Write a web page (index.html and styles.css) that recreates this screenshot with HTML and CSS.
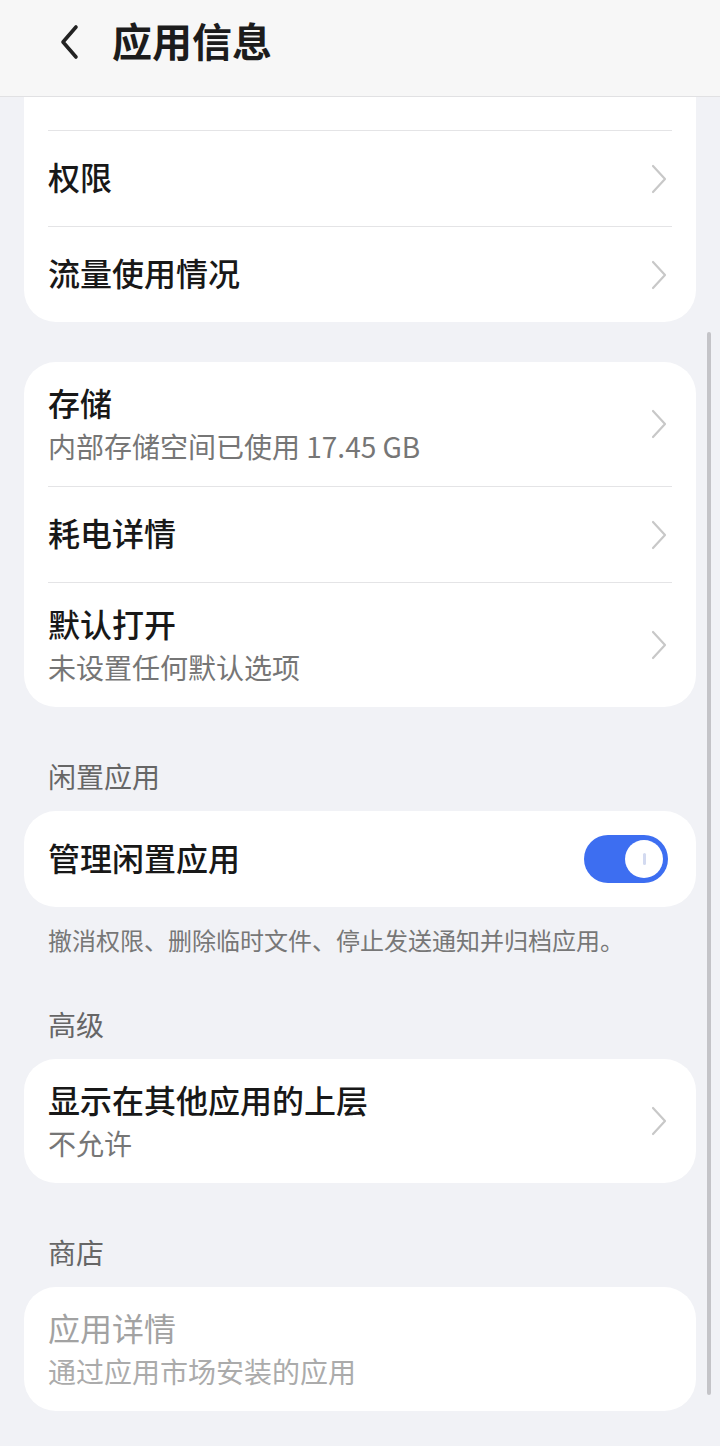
FILE: index.html
```html
<!DOCTYPE html>
<html lang="zh-CN">
<head>
  <meta charset="UTF-8">
  <meta name="viewport" content="width=device-width, initial-scale=1.0">
  <title>应用信息</title>
  <link rel="stylesheet" href="styles.css">
</head>
<body>
  <header class="topbar">
    <svg class="back" width="24" height="36" viewBox="0 0 24 36">
      <path d="M18 3 L5 18 L18 33" fill="none" stroke="#222" stroke-width="3.6" stroke-linecap="round" stroke-linejoin="round"/>
    </svg>
    <h1>应用信息</h1>
  </header>

  <main class="content">
    <section class="card">
      <div class="row two">
        <div class="text"><p class="title">通知</p></div>
        <svg class="chev" width="16" height="30" viewBox="0 0 16 30"><path d="M2 2 L14 15 L2 28" fill="none" stroke="#c8c8c8" stroke-width="2.2" stroke-linecap="round" stroke-linejoin="round"/></svg>
      </div>
      <div class="row">
        <div class="text"><p class="title">权限</p></div>
        <svg class="chev" width="16" height="30" viewBox="0 0 16 30"><path d="M2 2 L14 15 L2 28" fill="none" stroke="#c8c8c8" stroke-width="2.2" stroke-linecap="round" stroke-linejoin="round"/></svg>
      </div>
      <div class="row">
        <div class="text"><p class="title">流量使用情况</p></div>
        <svg class="chev" width="16" height="30" viewBox="0 0 16 30"><path d="M2 2 L14 15 L2 28" fill="none" stroke="#c8c8c8" stroke-width="2.2" stroke-linecap="round" stroke-linejoin="round"/></svg>
      </div>
    </section>

    <section class="card gap">
      <div class="row two">
        <div class="text">
          <p class="title">存储</p>
          <p class="sub">内部存储空间已使用 17.45 GB</p>
        </div>
        <svg class="chev" width="16" height="30" viewBox="0 0 16 30"><path d="M2 2 L14 15 L2 28" fill="none" stroke="#c8c8c8" stroke-width="2.2" stroke-linecap="round" stroke-linejoin="round"/></svg>
      </div>
      <div class="row">
        <div class="text"><p class="title">耗电详情</p></div>
        <svg class="chev" width="16" height="30" viewBox="0 0 16 30"><path d="M2 2 L14 15 L2 28" fill="none" stroke="#c8c8c8" stroke-width="2.2" stroke-linecap="round" stroke-linejoin="round"/></svg>
      </div>
      <div class="row two tall">
        <div class="text">
          <p class="title">默认打开</p>
          <p class="sub">未设置任何默认选项</p>
        </div>
        <svg class="chev" width="16" height="30" viewBox="0 0 16 30"><path d="M2 2 L14 15 L2 28" fill="none" stroke="#c8c8c8" stroke-width="2.2" stroke-linecap="round" stroke-linejoin="round"/></svg>
      </div>
    </section>

    <h2 class="section">闲置应用</h2>
    <section class="card">
      <div class="row">
        <div class="text"><p class="title">管理闲置应用</p></div>
        <span class="toggle"><span class="knob"></span></span>
      </div>
    </section>
    <p class="note">撤消权限、删除临时文件、停止发送通知并归档应用。</p>

    <h2 class="section">高级</h2>
    <section class="card">
      <div class="row two">
        <div class="text">
          <p class="title">显示在其他应用的上层</p>
          <p class="sub">不允许</p>
        </div>
        <svg class="chev" width="16" height="30" viewBox="0 0 16 30"><path d="M2 2 L14 15 L2 28" fill="none" stroke="#c8c8c8" stroke-width="2.2" stroke-linecap="round" stroke-linejoin="round"/></svg>
      </div>
    </section>

    <h2 class="section">商店</h2>
    <section class="card">
      <div class="row two disabled">
        <div class="text">
          <p class="title">应用详情</p>
          <p class="sub">通过应用市场安装的应用</p>
        </div>
      </div>
    </section>
  </main>

  <div class="scrollbar"></div>
</body>
</html>
```

FILE: styles.css
```css
body { margin: 0; background: #f1f2f6; font-family: "Noto Sans CJK SC", "Noto Sans", sans-serif; color: #1a1a1a; }
p, h1, h2 { margin: 0; }

.topbar { position: fixed; top: 0; left: 0; right: 0; height: 97px; box-sizing: border-box; display: flex; align-items: center; padding-left: 58px; background: #f7f7f7; border-bottom: 1px solid #e1e1e3; z-index: 2; }
.back { margin-right: 30px; margin-top: -12px; }
.topbar h1 { font-size: 40px; font-weight: 700; line-height: 48px; color: #1c1c1c; margin-top: -16px; }

.content { padding: 6px 24px 34px; }

.card { background: #fff; border-radius: 32px; overflow: hidden; }
.card.gap { margin-top: 40px; }

.row { display: flex; align-items: center; min-height: 96px; margin: 0 24px; box-sizing: border-box; }
.row + .row { border-top: 1px solid #e4e4e6; }
.row.two { min-height: 124px; }
.row.tall { min-height: 125px; }
.text { flex: 1; margin-top: -5px; }
.title { font-size: 32px; line-height: 48px; font-weight: 500; color: #181818; }
.sub { font-size: 28px; line-height: 40px; color: #767676; }
.disabled .title { color: #a2a2a2; font-weight: 400; }
.disabled .sub { color: #ababab; }

.chev { margin-right: 5px; }

.toggle { width: 84px; height: 48px; border-radius: 24px; background: #3d6ef1; display: flex; align-items: center; justify-content: flex-end; padding-right: 5px; box-sizing: border-box; margin-right: 4px; }
.knob { width: 38px; height: 38px; border-radius: 50%; background: #fff; display: flex; align-items: center; justify-content: center; }
.knob::after { content: ""; width: 3px; height: 12px; border-radius: 2px; background: #d3daf0; }

.section { font-size: 28px; line-height: 40px; font-weight: 400; color: #666; padding: 49px 24px 15px; }
.note { font-size: 24px; line-height: 36px; color: #777; padding: 15px 24px 0; }
.note + .section { padding-top: 46px; }

.scrollbar { position: fixed; top: 332px; right: 9px; width: 4px; height: 1063px; border-radius: 2px; background: #c4c4c8; }
```
